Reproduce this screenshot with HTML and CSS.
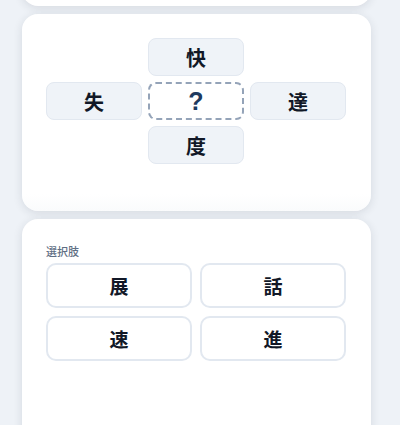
FILE: index.html
```html
<!DOCTYPE html>
<html lang="ja">
<head>
<meta charset="utf-8">
<link rel="stylesheet" href="styles.css">
</head>
<body>
<div class="page">
  <div class="card card-top"></div>
  <div class="card card-puzzle">
    <div class="cross">
      <div class="tile t-top">快</div>
      <div class="tile t-left">失</div>
      <div class="tile t-center">?</div>
      <div class="tile t-right">達</div>
      <div class="tile t-bottom">度</div>
    </div>
  </div>
  <div class="card card-choices">
    <div class="label">選択肢</div>
    <div class="choices">
      <button class="choice">展</button>
      <button class="choice">話</button>
      <button class="choice">速</button>
      <button class="choice">進</button>
    </div>
  </div>
</div>
</body>
</html>
```

FILE: styles.css
```css
html, body {
  margin: 0;
  padding: 0;
  background: #eef2f7;
  height: 425px;
  overflow: hidden;
}
body {
  font-family: "Noto Sans CJK JP", "Noto Sans", sans-serif;
}
.page {
  display: flex;
  flex-direction: column;
  gap: 8px;
  width: 349px;
  margin-left: 22px;
  margin-top: -34px;
}
.card {
  background: #ffffff;
  border-radius: 16px;
  box-shadow: 0 2px 10px rgba(30, 41, 59, 0.12);
  box-sizing: border-box;
}
.card-top {
  height: 40px;
  flex: none;
}
.card-puzzle {
  height: 197px;
  padding: 24px;
  flex: none;
  background: linear-gradient(#ffffff 0, #ffffff 180px, #fafbfc 197px);
}
.cross {
  display: grid;
  grid-template-columns: 96px 96px 96px;
  grid-template-rows: 38px 38px 38px;
  column-gap: 6px;
  row-gap: 6px;
}
.tile {
  display: flex;
  align-items: center;
  justify-content: center;
  background: #eff3f8;
  border: 1px solid #e2e8f0;
  border-radius: 8px;
  font-size: 20px;
  font-weight: 700;
  color: #111827;
}
.t-top { grid-column: 2; grid-row: 1; }
.t-left { grid-column: 1; grid-row: 2; }
.t-center {
  grid-column: 2; grid-row: 2;
  background: #ffffff;
  border: 2px dashed #94a3b8;
  color: #1e3a5f;
  font-family: "Liberation Sans", "Noto Sans", sans-serif;
  font-size: 25px;
  font-weight: 700;
}
.t-right { grid-column: 3; grid-row: 2; }
.t-bottom { grid-column: 2; grid-row: 3; }
.card-choices {
  padding: 24px;
  height: 240px;
  flex: none;
}
.label {
  font-size: 11px;
  line-height: 16px;
  color: #5f6f84;
  font-weight: 500;
  margin-bottom: 4px;
}
.choices {
  display: grid;
  grid-template-columns: 146px 146px;
  column-gap: 8px;
  row-gap: 8px;
}
.choice {
  height: 45px;
  background: #ffffff;
  border: 2px solid #e2e8f0;
  border-radius: 10px;
  font-family: "Noto Sans CJK JP", "Noto Sans", sans-serif;
  font-size: 19px;
  font-weight: 700;
  color: #111827;
  padding: 0;
}
```
